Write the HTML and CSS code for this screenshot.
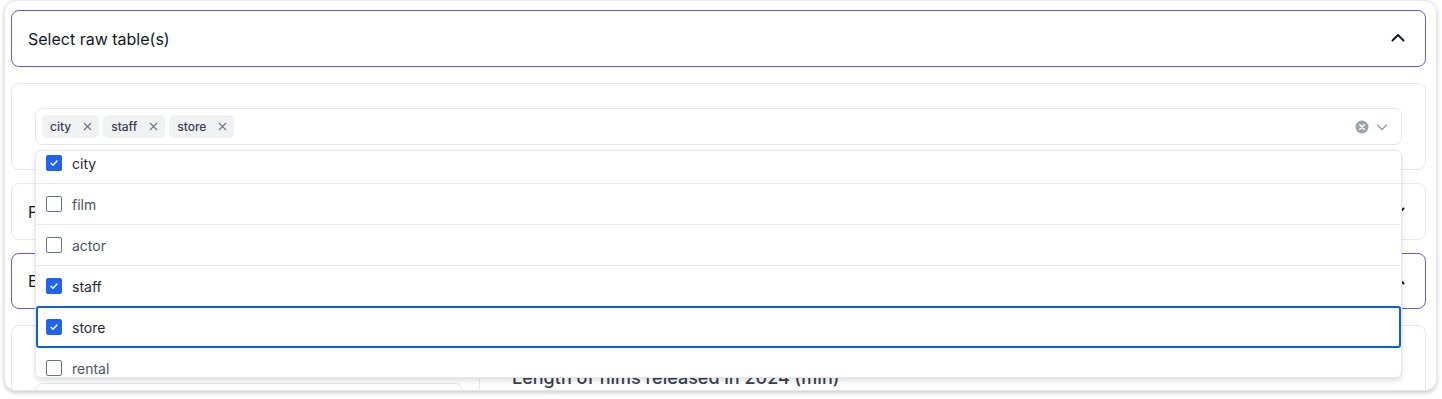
FILE: index.html
```html
<!DOCTYPE html>
<html lang="en">
<head>
<meta charset="utf-8">
<title>Select raw tables</title>
<link rel="stylesheet" href="styles.css">
</head>
<body>
<div class="card">
  <div class="acc-header acc-active">
    <span class="acc-title">Select raw table(s)</span>
    <svg class="acc-chev" width="16" height="16" viewBox="0 0 16 16"><path d="M2.5 10.5L8 5l5.5 5.5" fill="none" stroke="#111827" stroke-width="2" stroke-linecap="round" stroke-linejoin="round"/></svg>
  </div>

  <div class="panel panel-select">
    <div class="multi">
      <div class="tags">
        <span class="tag">city<svg class="tag-x" width="9" height="9" viewBox="0 0 9 9"><path d="M1 1l7 7M8 1L1 8" stroke="#6b7280" stroke-width="1.1"/></svg></span>
        <span class="tag">staff<svg class="tag-x" width="9" height="9" viewBox="0 0 9 9"><path d="M1 1l7 7M8 1L1 8" stroke="#6b7280" stroke-width="1.1"/></svg></span>
        <span class="tag">store<svg class="tag-x" width="9" height="9" viewBox="0 0 9 9"><path d="M1 1l7 7M8 1L1 8" stroke="#6b7280" stroke-width="1.1"/></svg></span>
      </div>
      <div class="multi-icons">
        <svg width="14" height="14" viewBox="0 0 14 14"><circle cx="7" cy="7" r="6.5" fill="#9ca3af"/><path d="M4.8 4.8l4.4 4.4M9.2 4.8l-4.4 4.4" stroke="#fff" stroke-width="1.6" stroke-linecap="round"/></svg>
        <svg width="14" height="14" viewBox="0 0 14 14"><path d="M2.5 5l4.5 4.5L11.5 5" fill="none" stroke="#9ca3af" stroke-width="1.5" stroke-linecap="round" stroke-linejoin="round"/></svg>
      </div>
    </div>

    <div class="dropdown">
      <ul class="options">
        <li class="opt checked"><span class="cb"><svg width="16" height="16" viewBox="0 0 16 16"><path d="M5 8.3l2 2 4-4.3" fill="none" stroke="#fff" stroke-width="1.5" stroke-linecap="round" stroke-linejoin="round"/></svg></span>city</li>
        <li class="opt"><span class="cb"></span>film</li>
        <li class="opt"><span class="cb"></span>actor</li>
        <li class="opt checked"><span class="cb"><svg width="16" height="16" viewBox="0 0 16 16"><path d="M5 8.3l2 2 4-4.3" fill="none" stroke="#fff" stroke-width="1.5" stroke-linecap="round" stroke-linejoin="round"/></svg></span>staff</li>
        <li class="opt checked focused"><span class="cb"><svg width="16" height="16" viewBox="0 0 16 16"><path d="M5 8.3l2 2 4-4.3" fill="none" stroke="#fff" stroke-width="1.5" stroke-linecap="round" stroke-linejoin="round"/></svg></span>store</li>
        <li class="opt"><span class="cb"></span>rental</li>
      </ul>
    </div>
  </div>

  <div class="acc-header acc-f">
    <span class="acc-title">F</span>
    <svg class="acc-chev" width="16" height="16" viewBox="0 0 16 16"><path d="M2.5 5.5L8 11l5.5-5.5" fill="none" stroke="#111827" stroke-width="2" stroke-linecap="round" stroke-linejoin="round"/></svg>
  </div>

  <div class="acc-header acc-active acc-e">
    <span class="acc-title">E</span>
    <svg class="acc-chev" width="16" height="16" viewBox="0 0 16 16"><path d="M2.5 10.5L8 5l5.5 5.5" fill="none" stroke="#111827" stroke-width="2" stroke-linecap="round" stroke-linejoin="round"/></svg>
  </div>

  <div class="panel panel-chart">
    <div class="chart-side">
      <div class="side-box"></div>
    </div>
    <div class="chart-main">
      <h3 class="chart-title">Length of films released in 2024 (min)</h3>
    </div>
  </div>
</div>
</body>
</html>
```

FILE: styles.css
```css
* { box-sizing: border-box; }
html, body { margin: 0; padding: 0; background: #ffffff; }
body {
  font-family: Inter, "Noto Sans", "Liberation Sans", sans-serif;
  color: #111827;
  height: 399px;
  overflow: hidden;
}
.card {
  margin-left: 4px;
  width: 1433px;
  height: 391px;
  border: 1px solid #e5e7eb;
  border-radius: 12px;
  box-shadow: 0 2px 4px rgba(0,0,0,0.2);
  padding: 9px 10px 0 6px;
  overflow: hidden;
  background: #fff;
}
.acc-header {
  height: 57px;
  border: 1px solid #e5e7eb;
  border-radius: 8px;
  display: flex;
  align-items: center;
  justify-content: space-between;
  padding: 0 19px 0 16px;
}
.acc-active { border-color: #5f5cf0; }
.acc-title {
  font-size: 16px;
  color: #111827;
}
.acc-chev { margin-top: -1px; }
.panel {
  border: 1px solid #e5e7eb;
  border-radius: 8px;
}
.panel-select {
  position: relative;
  margin-top: 16px;
  height: 87px;
  padding: 24px 23px 0 23px;
}
.multi {
  height: 37px;
  border: 1px solid #e5e7eb;
  border-radius: 7px;
  padding: 6px 12px 6px 6px;
  display: flex;
  align-items: center;
  justify-content: space-between;
}
.tags { display: flex; gap: 4px; }
.tag {
  height: 23px;
  display: inline-flex;
  align-items: center;
  gap: 12px;
  padding: 0 7px 0 8px;
  background: #f1f2f4;
  border-radius: 5px;
  font-size: 12px;
  font-weight: 500;
  color: #374151;
}
.tag-x { display: block; }
.multi-icons { display: flex; align-items: center; gap: 6px; }
.multi-icons svg { display: block; }

.dropdown {
  position: absolute;
  left: 23px;
  right: 23px;
  top: 66px;
  height: 228px;
  background: #fff;
  border: 1px solid #e5e7eb;
  border-radius: 6px;
  box-shadow: 0 3px 5px rgba(0,0,0,0.12);
  overflow: hidden;
  z-index: 5;
}
.options {
  list-style: none;
  margin: -8px 0 0 0;
  padding: 0;
}
.opt {
  height: 41px;
  border-bottom: 1px solid #e5e7eb;
  display: flex;
  align-items: center;
  gap: 10px;
  padding-left: 10px;
  font-size: 14px;
  color: #4b5563;
}
.opt.checked { color: #1f2937; }
.opt.focused {
  border: 2px solid #0b63ce;
  border-radius: 3px;
  padding-left: 8px;
  margin-top: -1px;
  height: 42px;
}
.cb {
  width: 16px;
  height: 16px;
  border: 1px solid #6b7280;
  border-radius: 2px;
  background: #fff;
  flex: none;
}
.cb svg { display: block; margin: -1px; }
.checked .cb { background: #1f63ee; border-color: #1f63ee; }

.acc-f { margin-top: 13px; }
.acc-e { margin-top: 13px; height: 56px; }

.panel-chart {
  margin-top: 16px;
  height: 120px;
  display: flex;
}
.chart-side {
  width: 468px;
  border-right: 1px solid #e5e7eb;
  padding: 57px 16px 0 23px;
}
.side-box {
  height: 60px;
  border: 1px solid #e5e7eb;
  border-radius: 8px;
}
.chart-main { flex: 1; padding: 41px 0 0 32px; }
.chart-title {
  margin: 0;
  font-size: 18px;
  font-weight: 500;
  color: #374151;
}
```
